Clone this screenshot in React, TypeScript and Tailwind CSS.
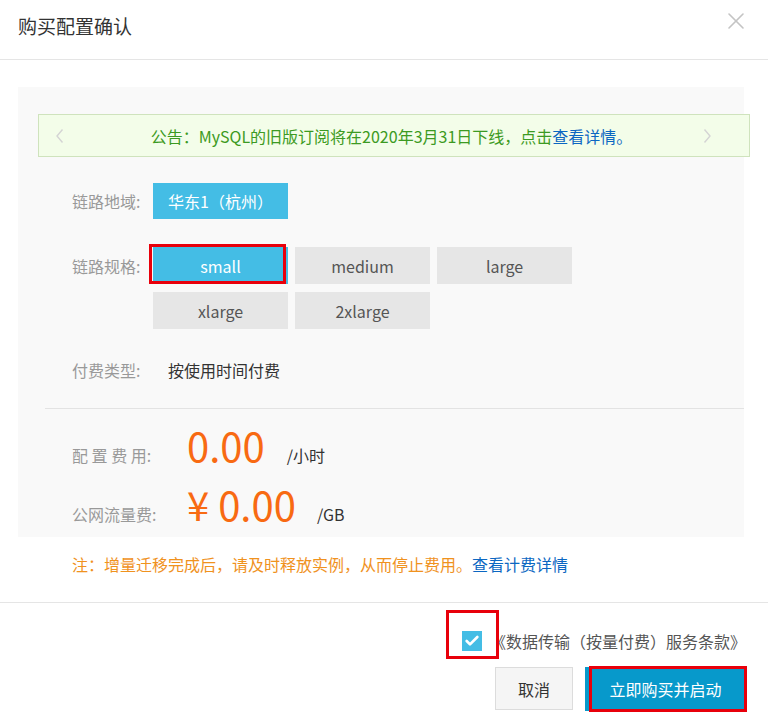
import { Check, X } from 'lucide-react'

const FONT = { fontFamily: '"Noto Sans CJK SC", "Liberation Sans", sans-serif' }

const SPECS = ['small', 'medium', 'large', 'xlarge', '2xlarge']

function Chevron({ dir }: { dir: 'left' | 'right' }) {
  return (
    <svg width="9" height="16" viewBox="0 0 9 16" className="shrink-0">
      <path
        d={dir === 'left' ? 'M7.5 1.5 L2 8 L7.5 14.5' : 'M1.5 1.5 L7 8 L1.5 14.5'}
        fill="none"
        stroke="#d4d4d4"
        strokeWidth="1.4"
      />
    </svg>
  )
}

function Notice() {
  return (
    <div className="ml-[20px] mr-[-6px] flex h-[43px] items-center border border-[#cfe3bd] bg-[#f3fde9] pl-[16px] pr-[37px] text-[16px]">
      <Chevron dir="left" />
      <span className="flex-1 pl-[16px] text-center text-[#3c9a22]">
        公告：MySQL的旧版订阅将在2020年3月31日下线，点击
        <span className="text-[#0b67c2]">查看详情。</span>
      </span>
      <Chevron dir="right" />
    </div>
  )
}

function SpecButton({ label, active }: { label: string; active?: boolean }) {
  return (
    <div
      className={`relative flex h-[37px] w-[135px] items-center justify-center text-[16px] ${
        active ? 'bg-[#44bde5] text-white' : 'bg-[#e6e6e6] text-[#555]'
      }`}
    >
      {label}
      {active && (
        <span className="absolute -left-[4px] -top-[3px] h-[40px] w-[137px] border-[3px] border-[#e8000b]" />
      )}
    </div>
  )
}

export default function App() {
  return (
    <div className="h-[727px] w-[768px] overflow-hidden bg-white text-[#333]" style={FONT}>
      {/* header */}
      <div className="flex h-[60px] items-start justify-between border-b border-[#e5e5e5] pl-[18px] pr-[18px]">
        <h1 className="pt-[13px] text-[19px] leading-[26px] text-[#333]">购买配置确认</h1>
        <X className="mt-[7px] h-[28px] w-[28px] text-[#c4c4c4]" strokeWidth={1.4} />
      </div>

      {/* body */}
      <div className="pt-[27px]">
        <div className="ml-[18px] h-[450px] w-[726px] bg-[#f9f9f9] pt-[27px]">
          <Notice />

          <div className="mt-[26px] flex items-center pl-[54px] text-[16px]">
            <span className="w-[81px] text-[#999]">链路地域:</span>
            <div className="flex h-[36px] w-[135px] items-center justify-center bg-[#44bde5] text-white">
              华东1（杭州）
            </div>
          </div>

          <div className="mt-[28px] flex items-start pl-[54px] text-[16px]">
            <span className="w-[81px] pt-[7px] text-[#999]">链路规格:</span>
            <div className="grid grid-cols-[repeat(3,135px)] gap-x-[7px] gap-y-[8px]">
              {SPECS.map((s, i) => (
                <SpecButton key={s} label={s} active={i === 0} />
              ))}
            </div>
          </div>

          <div className="mt-[30px] flex items-center pl-[54px] text-[16px] leading-[22px]">
            <span className="w-[96px] text-[#999]">付费类型:</span>
            <span className="text-[#333]">按使用时间付费</span>
          </div>

          <div className="ml-[27px] mt-[27px] h-px bg-[#e3e3e3]" />

          <div className="mt-[12px] flex items-baseline pl-[54px]">
            <span className="w-[115px] text-[16px] text-[#999]">配 置 费 用:</span>
            <span className="text-[40px] leading-[48px] text-[#f86a12]">0.00</span>
            <span className="ml-[22px] text-[16px] text-[#333]">/小时</span>
          </div>

          <div className="mt-[11px] flex items-baseline pl-[54px]">
            <span className="w-[115px] text-[16px] text-[#999]">公网流量费:</span>
            <span className="text-[40px] leading-[48px] text-[#f86a12]">¥ 0.00</span>
            <span className="ml-[21px] text-[16px] text-[#333]">/GB</span>
          </div>
        </div>

        <p className="mt-[16px] pl-[72px] text-[16px] leading-[22px] text-[#f0921e]">
          注：增量迁移完成后，请及时释放实例，从而停止费用。
          <span className="text-[#0b67c2]">查看计费详情</span>
        </p>
      </div>

      {/* footer */}
      <div className="mt-[27px] border-t border-[#e5e5e5] pr-[22px]">
        <div className="mt-[26px] flex items-center justify-end">
          <div className="relative mr-[8px] flex h-[20px] w-[20px] items-center justify-center bg-[#44bde5]">
            <Check className="h-[16px] w-[16px] text-white" strokeWidth={4} />
            <span className="absolute -left-[16px] -top-[21px] h-[49px] w-[53px] border-[3px] border-[#e8000b]" />
          </div>
          <span className="text-[16px] text-[#555]">《数据传输（按量付费）服务条款》</span>
        </div>
        <div className="mt-[14px] flex justify-end gap-[12px]">
          <button className="h-[43px] w-[78px] border border-[#dcdcdc] bg-[#f5f5f5] text-[16px] text-[#333]">
            取消
          </button>
          <button className="relative h-[44px] w-[161px] bg-[#0799cb] text-[16px] text-white">
            立即购买并启动
            <span className="absolute -right-[1px] -top-[1px] h-[46px] w-[158px] border-[3px] border-[#e8000b]" />
          </button>
        </div>
      </div>
    </div>
  )
}
